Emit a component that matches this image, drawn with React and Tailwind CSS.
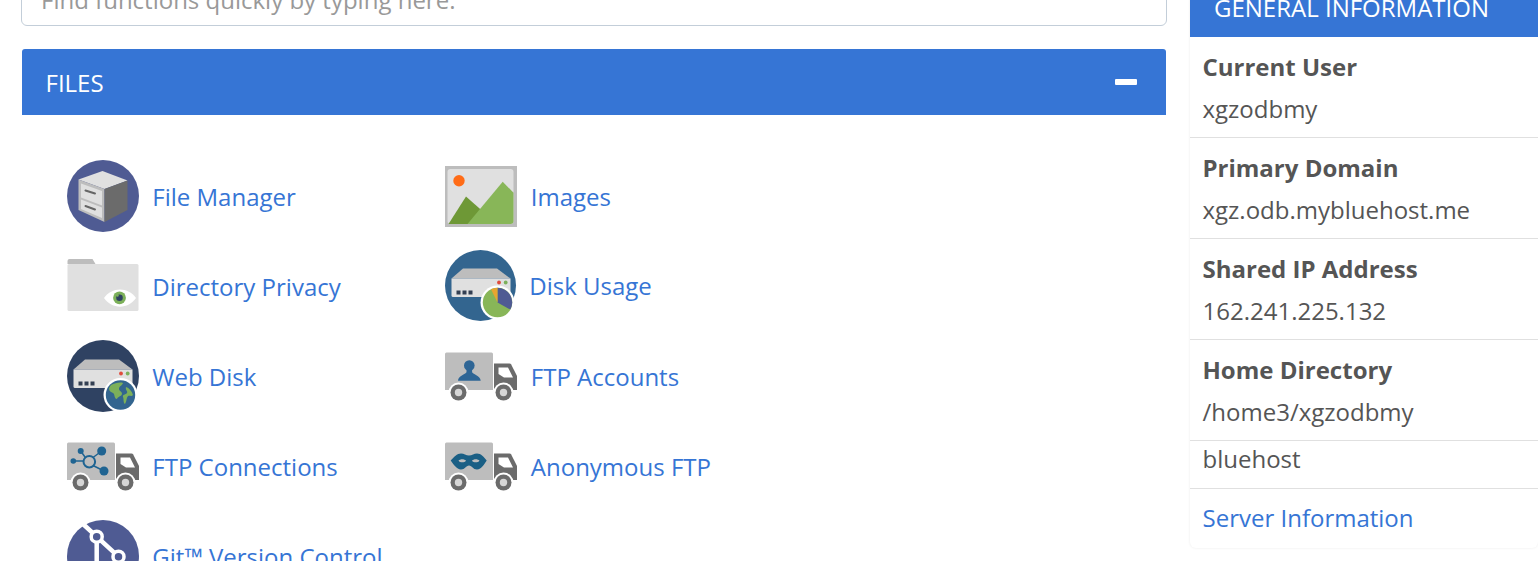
const Server = ({ dx = 0, dy = 0 }) => (
  <g transform={`translate(${dx} ${dy})`}>
    <path d="M6.500 28.500 18 18.500h34l13.500 10z" fill="#bdbdbd" />
    <path d="M6.500 28.500h59v17a1.500 1.500 0 0 1-1.500 1.500H8a1.500 1.500 0 0 1-1.500-1.500z" fill="#e0e0e0" />
    <rect x="11.500" y="40.500" width="4" height="4" fill="#333f52" />
    <rect x="17.500" y="40.500" width="4" height="4" fill="#333f52" />
    <rect x="23.500" y="40.500" width="4" height="4" fill="#333f52" />
    <circle cx="54" cy="32.500" r="1.900" fill="#e04b3c" />
    <circle cx="60.700" cy="32.500" r="1.900" fill="#7cb05a" />
  </g>
);

const Truck = ({ children }) => (
  <svg width="72" height="72" viewBox="0 0 72 72">
    <path d="M1.500 12.500h45a1.500 1.500 0 0 1 1.500 1.500v36H0V14a1.500 1.500 0 0 1 1.500-1.500z" fill="#bdbdbd" />
    <path d="M49 23.500h15.500a2 2 0 0 1 1.700 1L72 36v14H49z" fill="#6b6b6b" />
    <path d="M53.500 27.500h9.500l5 10h-9l-5.500-3.500z" fill="#fff" />
    <circle cx="13.500" cy="52.500" r="10" fill="#fff" />
    <circle cx="13.500" cy="52.500" r="8" fill="#6b6b6b" />
    <circle cx="13.500" cy="52.500" r="3.700" fill="#d6d6d6" />
    <circle cx="58.500" cy="52.500" r="10" fill="#fff" />
    <circle cx="58.500" cy="52.500" r="8" fill="#6b6b6b" />
    <circle cx="58.500" cy="52.500" r="3.700" fill="#d6d6d6" />
    {children}
  </svg>
);

const FileManagerIcon = () => (
  <svg width="72" height="72" viewBox="0 0 72 72">
    <circle cx="36" cy="36" r="36" fill="#4f5b93" />
    <path d="M11.500 19.500 35.500 11 60.500 20.500 37.500 29z" fill="#e0e0e0" />
    <path d="M11.500 19.500 37.500 29v33L11.500 50z" fill="#bdbdbd" />
    <path d="M37.500 29 60.500 20.500V50L37.500 62z" fill="#6b6b6b" />
    <path d="M14 23.500 35 31v14.500L14 37.500z" fill="#e0e0e0" />
    <path d="M14 39.500 35 47.500v10.500L14 49z" fill="#e0e0e0" />
    <path d="M18.500 30.500 28 33.500" stroke="#666" strokeWidth="2" strokeLinecap="round" />
    <path d="M18.500 46 28 49.500" stroke="#666" strokeWidth="2" strokeLinecap="round" />
  </svg>
);

const ImagesIcon = () => (
  <svg width="72" height="72" viewBox="0 0 72 72">
    <rect x="0" y="6" width="72" height="61" fill="#bdbdbd" />
    <rect x="2.500" y="9" width="66" height="55" rx="3" fill="#e0e0e0" />
    <circle cx="14" cy="20.700" r="5.700" fill="#ff6c17" />
    <path d="M3.500 64 21 36.500l17.500 15.500L28 64z" fill="#6e9836" />
    <path d="M22.500 64 57.700 21.700 68.500 32.700V61a3 3 0 0 1-3 3z" fill="#88b658" />
  </svg>
);

const DirectoryPrivacyIcon = () => (
  <svg width="72" height="72" viewBox="0 0 72 72">
    <path d="M0.500 14v-3a2 2 0 0 1 2-2h23l3 5z" fill="#bdbdbd" />
    <rect x="0.500" y="14" width="71" height="47" rx="1.500" fill="#e0e0e0" />
    <path d="M37 48c8-11.500 24-11.500 32 0-8 11.500-24 11.500-32 0z" fill="#fff" />
    <circle cx="52.500" cy="47.800" r="6.400" fill="#7cb05a" />
    <circle cx="52.500" cy="47.800" r="3.300" fill="#2f4262" />
    <circle cx="50.500" cy="45.500" r="1.200" fill="#7cb05a" />
  </svg>
);

const DiskUsageIcon = () => (
  <svg width="72" height="72" viewBox="0 0 72 72">
    <circle cx="35.500" cy="35.500" r="35.500" fill="#33658f" />
    <Server />
    <circle cx="52.500" cy="52.500" r="17" fill="#fff" />
    <circle cx="52.500" cy="52.500" r="14.700" fill="#88b658" />
    <path d="M52.500 52.500V37.800a14.700 14.700 0 0 1 12.900 21.800z" fill="#4f5b93" />
    <path d="M52.500 52.500V37.800a14.700 14.700 0 0 0-6.500 1.500z" fill="#e8a530" />
  </svg>
);

const WebDiskIcon = () => (
  <svg width="72" height="72" viewBox="0 0 72 72">
    <circle cx="36" cy="36" r="36" fill="#2f4262" />
    <Server dx="0" dy="1" />
    <circle cx="53.500" cy="55" r="17" fill="#fff" />
    <circle cx="53.500" cy="55" r="14.700" fill="#33658f" />
    <path d="M44 45c4-2 9-3 12-2-1 3-4 3-4 6 0 2 3 2 3 5-1 3-4 2-5 5-3 0-2-5-4-6-2-1-4-2-4-4 0-1 1-3 2-4zM59 47c3 1 6 4 7 8-2 2-3 0-5 1-2 2-1 5-3 8-2-1-1-5-2-7-1-3 3-2 4-4 1-2-2-3-1-6z" fill="#7cb05a" />
  </svg>
);

const GitIcon = () => (
  <svg width="72" height="72" viewBox="0 0 72 72">
    <circle cx="36" cy="36" r="36" fill="#4f5b93" />
    <path d="M16 4 29.700 16.700 51.500 36.700M29.700 16.700V50" stroke="#fff" strokeWidth="4.500" fill="none" />
    <circle cx="29.700" cy="16.700" r="5.500" fill="#4f5b93" stroke="#fff" strokeWidth="3.500" />
    <circle cx="51.500" cy="36.700" r="5.500" fill="#4f5b93" stroke="#fff" strokeWidth="3.500" />
  </svg>
);

const items = [
  [<FileManagerIcon />, "File Manager", "ml-[13.3px] mt-[1px]"],
  [<ImagesIcon />, "Images", "ml-[13.8px] mt-[1px]"],
  [<DirectoryPrivacyIcon />, "Directory Privacy", "ml-[13.3px] mt-[1px]"],
  [<DiskUsageIcon />, "Disk Usage", "ml-[12.3px] -mt-[1px]"],
  [<WebDiskIcon />, "Web Disk", "ml-[13.3px] mt-[1px]"],
  [
    <Truck>
      <circle cx="24.300" cy="25.500" r="5.300" fill="#2e6595" />
      <path d="M21.500 29.500h5.600v2.500c0 2 8.500 3.500 8.600 8.800H13c0-5.300 8.500-6.800 8.500-8.800z" fill="#2e6595" />
    </Truck>,
    "FTP Accounts",
    "ml-[13.8px] mt-[1px]",
  ],
  [
    <Truck>
      <g stroke="#1f6492" strokeWidth="1.500" fill="none">
        <path d="M6.300 31H17M26 27.500l8.700-6.500M26 35.500l11 5.500M13.700 21l5 7" />
        <circle cx="22.300" cy="31.700" r="5.800" strokeWidth="2" />
      </g>
      <circle cx="34.700" cy="21" r="4.500" fill="#1f6492" />
      <circle cx="37" cy="41" r="4.500" fill="#1f6492" />
      <circle cx="13.700" cy="21" r="3" fill="#1f6492" />
      <circle cx="6.300" cy="31" r="2.800" fill="#1f6492" />
    </Truck>,
    "FTP Connections",
    "ml-[13.3px] mt-[1px]",
  ],
  [
    <Truck>
      <path fillRule="evenodd" d="M5.700 30.500C9 27 12 23.500 16 23.500c3 0 5 2 8 2s5-2 8-2c4 0 7 3.500 9.700 7-2.700 3.500-5 9-9.700 9-4 0-5-4-8-4s-4 4-8 4c-4.500 0-7.500-5.500-10.300-9zM13.500 30.700c1.500-2 6-2 7.500 0-1.500 2-6 2-7.500 0zM27 30.700c1.500-2 6-2 7.500 0-1.500 2-6 2-7.500 0z" fill="#1a5f85" />
    </Truck>,
    "Anonymous FTP",
    "ml-[13.8px] mt-[1px]",
  ],
  [<GitIcon />, "Git™ Version Control", "ml-[13.3px] mt-[1px]"],
];

const infoRows = [
  ["Current User", "xgzodbmy"],
  ["Primary Domain", "xgz.odb.mybluehost.me"],
  ["Shared IP Address", "162.241.225.132"],
  ["Home Directory", "/home3/xgzodbmy"],
];

export default function App() {
  return (
    <div
      className="h-[561px] overflow-hidden bg-white text-[#555]"
      style={{ fontFamily: "'Open Sans', sans-serif" }}
    >
      <div className="flex items-start -mt-[34px] pl-[22px]">
        <div className="w-[1144px] shrink-0">
          <input
            readOnly
            placeholder="Find functions quickly by typing here."
            className="block -ml-px w-[1146px] h-[60px] pl-[19px] pt-[6px] text-[24px] bg-white border border-[#c3ced9] rounded-[6px] outline-none placeholder:text-[#999]"
          />
          <div className="mt-[23px] flex items-center justify-between h-[66px] pl-[23.5px] pr-[29px] pt-[2px] bg-[#3675d5] rounded-t-[3px] text-white text-[24px]">
            <span>FILES</span>
            <span className="block w-[22px] h-[6px] -mt-[2px] bg-white rounded-[1px]" />
          </div>
          <div className="grid grid-cols-[378px_378px] auto-rows-[90px] pt-[45px] pl-[45px]">
            {items.map(([icon, label, labelClass]) => (
              <a key={label} className="flex items-center h-[72px] text-[24px] text-[#3675d5]">
                {icon}
                <span className={labelClass}>{label}</span>
              </a>
            ))}
          </div>
        </div>

        <div className="ml-[24px] w-[348px] shrink-0 rounded-b-[6px] shadow-[0_0_3px_rgba(0,0,0,0.08)] bg-white text-[24px]">
          <div className="flex items-end h-[71px] pl-[24px] pb-[17px] bg-[#3675d5] text-white leading-[24px]">
            GENERAL INFORMATION
          </div>
          {infoRows.map(([label, value]) => (
            <div key={label} className="h-[101px] pl-[12.5px] pt-[10px] border-b border-[#e0e0e0]">
              <div className="font-bold leading-[40px]">{label}</div>
              <div className="leading-[44px]">{value}</div>
            </div>
          ))}
          <div className="h-[48px] pl-[12.5px] leading-[36px] border-b border-[#e0e0e0]">bluehost</div>
          <div className="h-[59px] pl-[12.5px] leading-[58px] text-[#3675d5]">Server Information</div>
        </div>
      </div>
    </div>
  );
}
